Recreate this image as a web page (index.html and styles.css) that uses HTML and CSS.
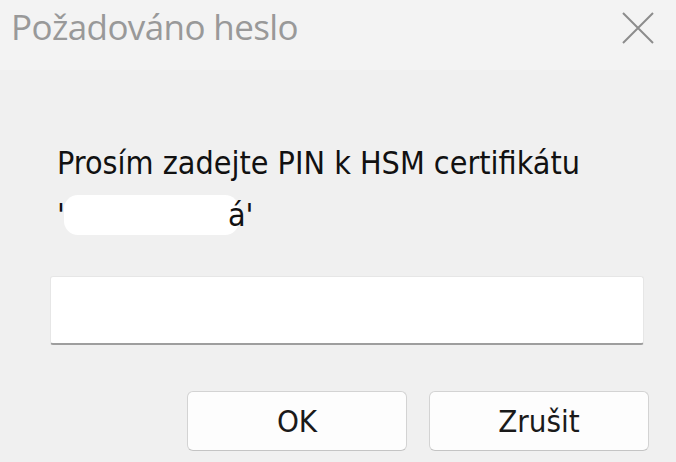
FILE: index.html
```html
<!DOCTYPE html>
<html>
<head>
<meta charset="utf-8">
<link rel="stylesheet" href="styles.css">
</head>
<body>
<div class="dialog">
  <div class="titlebar">
    <span class="title">Požadováno heslo</span>
    <svg class="close" width="32" height="32" viewBox="0 0 32 32"><path d="M1 1 L31 31 M31 1 L1 31" stroke="#8c8c8c" stroke-width="2" fill="none"/></svg>
  </div>
  <div class="content">
    <p class="prompt">Prosím zadejte PIN k HSM certifikátu</p>
    <p class="prompt second"><span>'</span><span class="redact"></span><span class="tail">á'</span></p>
    <div class="input"></div>
    <div class="buttons">
      <button class="btn">OK</button>
      <button class="btn">Zrušit</button>
    </div>
  </div>
</div>
</body>
</html>
```
FILE: styles.css
```css
html, body { margin: 0; padding: 0; }
body { width: 676px; height: 462px; background: #f0f0f0; overflow: hidden; }
.dialog { display: flex; flex-direction: column; height: 100%; }
.titlebar {
  height: 70px; background: #f3f3f3; display: flex; align-items: flex-start;
  justify-content: space-between; padding: 0 22px 0 11px; box-sizing: border-box;
}
.title {
  font-family: "Open Sans", sans-serif; font-size: 35px; color: #999999;
  margin-top: 3px; letter-spacing: -0.6px; line-height: normal;
}
.close { margin-top: 12px; }
.content { padding: 67px 0 0 57px; display: flex; flex-direction: column; }
.prompt {
  margin: 0; font-family: "DejaVu Sans Condensed", "DejaVu Sans", sans-serif;
  font-size: 32px; color: #111111; line-height: 52px; height: 52px;
}
.second { display: flex; align-items: center; }
.redact { display: inline-block; width: 175px; height: 40px; background: #ffffff; border-radius: 14px; margin-left: -1px; }
.tail { margin-left: -11px; }
.input {
  margin-top: 35px; width: 594px; height: 69px; box-sizing: border-box; margin-left: -7px;
  background: #ffffff; border: 1px solid #e6e6e6; border-bottom: 2px solid #9e9e9e; border-radius: 3px;
}
.buttons { display: flex; justify-content: flex-end; gap: 22px; margin-top: 46px; padding-right: 27px; }
.btn {
  width: 220px; height: 60px; background: #fdfdfd; border: 1px solid #d3d3d3;
  border-bottom-color: #c4c4c4; border-radius: 6px;
  font-family: "DejaVu Sans Condensed", "DejaVu Sans", sans-serif; font-size: 31px; color: #1a1a1a;
  padding: 0;
}
```
